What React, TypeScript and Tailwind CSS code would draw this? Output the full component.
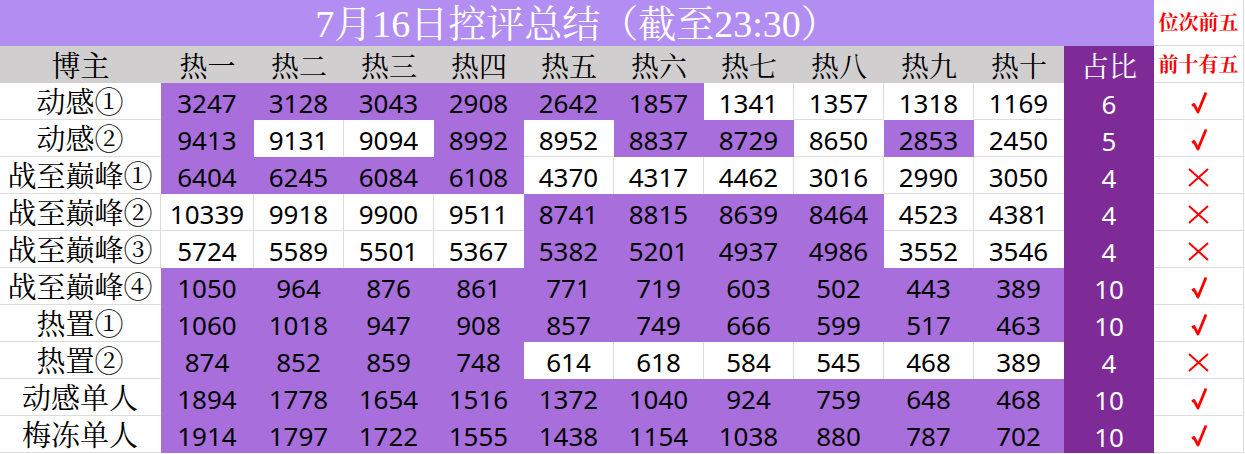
import React from "react"

const SERIF = "[font-family:'Liberation_Serif','Noto_Serif_CJK_SC','Noto_Sans_CJK_SC',serif]"
const NUM = "[font-family:'Noto_Sans','Noto_Sans_CJK_SC',sans-serif]"

const heads = ["热一", "热二", "热三", "热四", "热五", "热六", "热七", "热八", "热九", "热十"]

// mask: 1 = purple cell (top five position), 0 = white
const rows = [
  { name: "动感①", vals: [3247, 3128, 3043, 2908, 2642, 1857, 1341, 1357, 1318, 1169], mask: "1111110000", ratio: 6, ok: true },
  { name: "动感②", vals: [9413, 9131, 9094, 8992, 8952, 8837, 8729, 8650, 2853, 2450], mask: "1001011010", ratio: 5, ok: true },
  { name: "战至巅峰①", vals: [6404, 6245, 6084, 6108, 4370, 4317, 4462, 3016, 2990, 3050], mask: "1111000000", ratio: 4, ok: false },
  { name: "战至巅峰②", vals: [10339, 9918, 9900, 9511, 8741, 8815, 8639, 8464, 4523, 4381], mask: "0000111100", ratio: 4, ok: false },
  { name: "战至巅峰③", vals: [5724, 5589, 5501, 5367, 5382, 5201, 4937, 4986, 3552, 3546], mask: "0000111100", ratio: 4, ok: false },
  { name: "战至巅峰④", vals: [1050, 964, 876, 861, 771, 719, 603, 502, 443, 389], mask: "1111111111", ratio: 10, ok: true },
  { name: "热置①", vals: [1060, 1018, 947, 908, 857, 749, 666, 599, 517, 463], mask: "1111111111", ratio: 10, ok: true },
  { name: "热置②", vals: [874, 852, 859, 748, 614, 618, 584, 545, 468, 389], mask: "1111000000", ratio: 4, ok: false },
  { name: "动感单人", vals: [1894, 1778, 1654, 1516, 1372, 1040, 924, 759, 648, 468], mask: "1111111111", ratio: 10, ok: true },
  { name: "梅冻单人", vals: [1914, 1797, 1722, 1555, 1438, 1154, 1038, 880, 787, 702], mask: "1111111111", ratio: 10, ok: true },
]

function Check() {
  return (
    <svg width="18" height="23" viewBox="0 0 18 23" className="mt-[8px]">
      <path d="M2 14.5 L4 13.5 L8 21 L16 1.5" fill="none" stroke="#ff0000" strokeWidth="2.8" strokeLinejoin="round" />
    </svg>
  )
}

function Cross() {
  return (
    <svg width="21" height="19" viewBox="0 0 21 19" className="mt-[11px]">
      <path d="M1 1 L20 18 M20 1 L1 18" stroke="#ff0000" strokeWidth="2" />
    </svg>
  )
}

export default function App() {
  return (
    <div className="w-[1245px] h-[454px] bg-white overflow-hidden">
      <div className="grid grid-cols-[161px_93px_repeat(9,90px)_90px_90px]">
        {/* title row */}
        <div className={`col-span-12 h-[46px] bg-[#b28df2] flex items-center justify-center pt-[3px] text-white text-[38px] ${SERIF}`}>
          7月16日控评总结（截至23:30）
        </div>
        <div className={`h-[46px] border-r border-b border-[#dcdcdc] flex items-center justify-center text-[#ff0000] text-[20px] font-bold ${SERIF}`}>
          位次前五
        </div>

        {/* header row */}
        <div className={`h-[37px] bg-[#d0cece] flex items-center justify-center pt-[6px] text-black text-[29px] ${SERIF}`}>博主</div>
        {heads.map((h) => (
          <div key={h} className={`h-[37px] bg-[#d0cece] flex items-center justify-center pt-[6px] text-black text-[28px] ${SERIF}`}>
            {h}
          </div>
        ))}
        <div className={`h-[37px] bg-[#7e2a97] flex items-center justify-center pt-[6px] text-white text-[28px] ${SERIF}`}>占比</div>
        <div className={`h-[37px] border-r border-b border-[#dcdcdc] flex items-center justify-center pt-[2px] text-[#ff0000] text-[20px] font-bold ${SERIF}`}>
          前十有五
        </div>

        {/* data rows */}
        {rows.map((r, ri) => {
          const below = rows[ri + 1]
          return (
            <React.Fragment key={r.name}>
              <div
                className={`h-[37px] border-b border-r border-b-[#dcdcdc] ${
                  r.mask[0] === "0" ? "border-r-[#dcdcdc]" : "border-r-white"
                } flex items-center justify-center pt-[5px] text-black text-[29px] whitespace-nowrap ${SERIF}`}
              >
                {r.name}
              </div>
              {r.vals.map((v, i) => {
                const purple = r.mask[i] === "1"
                const nextWhite = i < 9 && r.mask[i + 1] === "0"
                const belowWhite = below ? below.mask[i] === "0" : true
                let cls = "bg-[#a86fdc] border-[#a86fdc]"
                if (!purple) {
                  cls = `bg-white ${nextWhite ? "border-r-[#dcdcdc]" : "border-r-white"} ${
                    belowWhite ? "border-b-[#dcdcdc]" : "border-b-white"
                  }`
                }
                return (
                  <div
                    key={i}
                    className={`h-[37px] border-r border-b ${cls} flex items-center justify-center pt-[5px] text-black text-[26px] ${NUM}`}
                  >
                    {v}
                  </div>
                )
              })}
              <div className={`h-[37px] bg-[#7e2a97] flex items-center justify-center pt-[5px] text-white text-[26px] ${NUM}`}>
                {r.ratio}
              </div>
              <div className="h-[37px] border-r border-b border-[#dcdcdc] flex items-start justify-center">
                {r.ok ? <Check /> : <Cross />}
              </div>
            </React.Fragment>
          )
        })}
      </div>
    </div>
  )
}
